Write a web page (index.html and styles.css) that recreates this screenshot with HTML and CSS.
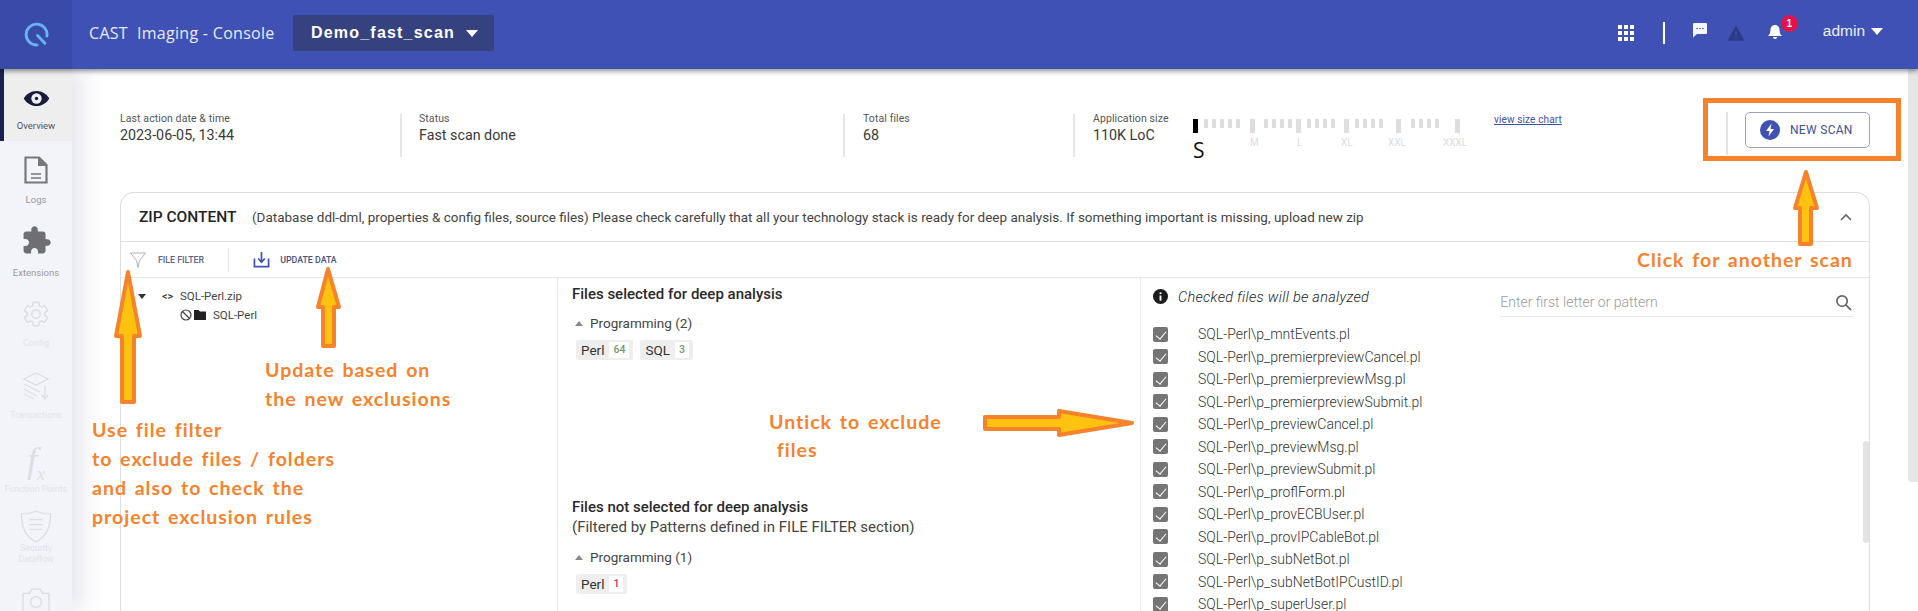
FILE: index.html
```html
<!DOCTYPE html>
<html lang="en">
<head>
<meta charset="utf-8">
<title>CAST Imaging - Console</title>
<link rel="stylesheet" href="styles.css">
</head>
<body>
<div class="app">
  <header class="topbar">
    <div class="logo-cell">
      <svg class="logo" viewBox="0 0 24 24"><path d="M22 13.500A10 10 0 1 0 12.500 22M13 13L20 20.500"/></svg>
    </div>
    <div class="app-title">CAST&nbsp; Imaging - Console</div>
    <div class="project"><span>Demo_fast_scan</span><i class="caret"></i></div>
    <div class="top-actions">
      <svg class="ic-grid" viewBox="0 0 16 16"><g><rect x="0" y="0" width="4" height="4"/><rect x="6" y="0" width="4" height="4"/><rect x="12" y="0" width="4" height="4"/><rect x="0" y="6" width="4" height="4"/><rect x="6" y="6" width="4" height="4"/><rect x="12" y="6" width="4" height="4"/><rect x="0" y="12" width="4" height="4"/><rect x="6" y="12" width="4" height="4"/><rect x="12" y="12" width="4" height="4"/></g></svg>
      <span class="top-sep"></span>
      <svg class="ic-chat" viewBox="0 0 16 16"><path d="M2 1h12a1 1 0 0 1 1 1v9a1 1 0 0 1-1 1H5l-4 3.500V2a1 1 0 0 1 1-1z"/><g class="dots"><circle cx="5" cy="6.500" r=".8"/><circle cx="8" cy="6.500" r=".8"/><circle cx="11" cy="6.500" r=".8"/></g></svg>
      <svg class="ic-warn" viewBox="0 0 18 16"><path d="M9 0.500L17.500 15.500H0.500z"/><path class="warn-mark" d="M8.300 6H9.700V11H8.300zM8.300 12H9.700V13.400H8.300z"/></svg>
      <div class="bell-wrap">
        <svg class="ic-bell" viewBox="0 0 16 16"><path d="M8 1c3 0 4.600 2.400 4.600 5.200 0 3 1 4.300 2.400 5.800H1c1.400-1.500 2.400-2.800 2.400-5.800C3.400 3.400 5 1 8 1zM6 13h4c0 1.300-.9 2-2 2s-2-.7-2-2z"/></svg>
        <span class="badge">1</span>
      </div>
      <div class="user"><span>admin</span><i class="caret"></i></div>
    </div>
  </header>

  <div class="content">
    <nav class="sidebar">
      <div class="nav-item active">
        <svg class="nav-ic eye" viewBox="0 0 28 18"><path class="dark" d="M14 1C8 1 3 4.500 .5 9 3 13.500 8 17 14 17s11-3.500 13.500-8C25 4.500 20 1 14 1z"/><circle class="light" cx="14" cy="9" r="5.500"/><circle class="dark" cx="14" cy="9" r="1.800"/></svg>
        <span>Overview</span>
      </div>
      <div class="nav-item dim">
        <svg class="nav-ic doc" viewBox="0 0 24 28"><path class="doc-line" d="M1.500 1.500H15L22.500 9V26.500H1.500z"/><path class="doc-fold" d="M14 1L23 10H14z"/><path class="doc-line thin" d="M7 18H17M7 22H17"/></svg>
        <span>Logs</span>
      </div>
      <div class="nav-item dim ext">
        <svg class="nav-ic puzzle" viewBox="0 0 24 24"><path d="M20.500 11H19V7c0-1.100-.9-2-2-2h-4V3.500C13 2.120 11.880 1 10.500 1S8 2.120 8 3.500V5H4c-1.100 0-1.990.9-1.990 2v3.800H3.500c1.490 0 2.700 1.210 2.700 2.700s-1.210 2.700-2.700 2.700H2V20c0 1.100.9 2 2 2h3.800v-1.500c0-1.490 1.210-2.700 2.700-2.700 1.490 0 2.700 1.210 2.700 2.700V22H17c1.100 0 2-.9 2-2v-4h1.500c1.380 0 2.500-1.120 2.500-2.500S21.880 11 20.500 11z"/></svg>
        <span>Extensions</span>
      </div>
      <div class="nav-item faded">
        <svg class="nav-ic line" viewBox="0 0 24 24"><path d="M19.430 12.980c.04-.32.07-.64.07-.98 0-.34-.03-.66-.07-.98l2.110-1.650c.19-.15.24-.42.12-.64l-2-3.460c-.09-.16-.26-.25-.44-.25-.06 0-.12.01-.17.03l-2.490 1c-.52-.4-1.080-.73-1.690-.98l-.38-2.650C14.460 2.180 14.250 2 14 2h-4c-.25 0-.46.18-.49.42l-.38 2.650c-.61.25-1.170.59-1.690.98l-2.490-1c-.06-.02-.12-.03-.18-.03-.17 0-.34.09-.43.25l-2 3.460c-.13.22-.07.49.12.64l2.110 1.650c-.04.32-.07.65-.07.98 0 .33.03.66.07.98l-2.110 1.650c-.19.15-.24.42-.12.64l2 3.460c.09.16.26.25.44.25.06 0 .12-.01.17-.03l2.490-1c.52.4 1.080.73 1.690.98l.38 2.650c.03.24.24.42.49.42h4c.25 0 .46-.18.49-.42l.38-2.650c.61-.25 1.170-.59 1.690-.98l2.490 1c.06.02.12.03.18.03.17 0 .34-.09.43-.25l2-3.460c.12-.22.07-.49-.12-.64l-2.110-1.650z"/><circle cx="12" cy="12" r="3.600"/></svg>
        <span>Config</span>
      </div>
      <div class="nav-item faded">
        <svg class="nav-ic line" viewBox="0 0 26 28"><path d="M13 1L25 7L13 13L1 7zM1 12L17 20M1 17L14 24M1 22L11 27M22 14V26M19 23L22 27L25 23"/></svg>
        <span>Transactions</span>
      </div>
      <div class="nav-item faded">
        <div class="fx">f<sub>x</sub></div>
        <span>Function Points</span>
      </div>
      <div class="nav-item faded sec">
        <svg class="nav-ic line" viewBox="0 0 32 34"><path d="M16 1C21 3.500 26 4 31 4C31 18 27 27 16 33C5 27 1 18 1 4C6 4 11 3.500 16 1zM9 10H23M9 15H23M10 20H22"/></svg>
        <span>Security<br>Dataflow</span>
      </div>
      <div class="nav-item faded">
        <svg class="nav-ic line" viewBox="0 0 26 26"><path d="M1 5H7L9 1H17L19 5H25V25H1z"/><circle cx="13" cy="13" r="5"/></svg>
      </div>
    </nav>

    <main class="main">
      <section class="stats">
        <div class="stat stat-date">
          <div class="stat-label">Last action date &amp; time</div>
          <div class="stat-value">2023-06-05, 13:44</div>
        </div>
        <div class="stat stat-status">
          <div class="stat-label">Status</div>
          <div class="stat-value">Fast scan done</div>
        </div>
        <div class="stat stat-files">
          <div class="stat-label">Total files</div>
          <div class="stat-value">68</div>
        </div>
        <div class="stat stat-app">
          <div class="stat-label">Application size</div>
          <div class="stat-value">110K LoC</div>
        </div>
        <div class="size-scale">
          <div class="ticks">
            <i class="tick on"></i>
            <i class="tick first"></i><i class="tick"></i><i class="tick"></i><i class="tick"></i><i class="tick"></i>
            <i class="tick tall g14"></i>
            <i class="tick g13"></i><i class="tick"></i><i class="tick"></i><i class="tick"></i>
            <i class="tick tall"></i>
            <i class="tick g10"></i><i class="tick"></i><i class="tick"></i><i class="tick"></i>
            <i class="tick tall g13"></i>
            <i class="tick g10"></i><i class="tick"></i><i class="tick"></i><i class="tick"></i>
            <i class="tick tall g17"></i>
            <i class="tick g14"></i><i class="tick"></i><i class="tick"></i><i class="tick"></i>
            <i class="tick tall g20"></i>
          </div>
          <div class="scale-labels"><b>S</b><span>M</span><span>L</span><span>XL</span><span>XXL</span><span>XXXL</span></div>
        </div>
        <a class="size-link" href="#">view size chart</a>
        <div class="scan-wrap">
          <button class="scan-btn">
            <svg viewBox="0 0 20 20"><circle cx="10" cy="10" r="10"/><path class="bolt" d="M11.500 3.500L6 11H9.500L8.500 16.500L14 9H10.500z"/></svg>
            NEW SCAN
          </button>
        </div>
      </section>

      <section class="card">
        <div class="card-head">
          <h2>ZIP CONTENT</h2>
          <p>(Database ddl-dml, properties &amp; config files, source files) Please check carefully that all your technology stack is ready for deep analysis. If something important is missing, upload new zip</p>
          <svg class="chevron" viewBox="0 0 12 8"><path d="M1 7L6 2L11 7"/></svg>
        </div>
        <div class="toolbar">
          <div class="tool">
            <svg class="ic-funnel" viewBox="0 0 16 16"><path d="M.5 1H15.500L9.500 8.500L8 15.500L6.500 8.500z"/></svg>
            <span>FILE FILTER</span>
          </div>
          <span class="tool-sep"></span>
          <div class="tool tool-update">
            <svg class="ic-update" viewBox="0 0 18 18"><path d="M1.500 8V16.500H16.500V8M9 1V11M5.500 8L9 12L12.500 8"/></svg>
            <span>UPDATE DATA</span>
          </div>
        </div>
        <div class="columns">
          <div class="col col-tree">
            <div class="tree-row">
              <i class="tree-caret"></i>
              <span class="code">&lt;&gt;</span>
              <span>SQL-Perl.zip</span>
            </div>
            <div class="tree-row tree-child">
              <svg class="ic-ban" viewBox="0 0 12 12"><circle cx="6" cy="6" r="5"/><path d="M2.500 2.500L9.500 9.500"/></svg>
              <svg class="ic-folder" viewBox="0 0 12 10"><path d="M0 0H4.500L6 1.500H12V10H0z"/></svg>
              <span>SQL-Perl</span>
            </div>
          </div>

          <div class="col col-tech">
            <div class="tech-block">
              <h3>Files selected for deep analysis</h3>
              <div class="group"><i class="up"></i>Programming (2)</div>
              <div class="chips">
                <span class="chip">Perl<em>64</em></span>
                <span class="chip">SQL<em>3</em></span>
              </div>
            </div>
            <div class="tech-block lower">
              <h3>Files not selected for deep analysis</h3>
              <p>(Filtered by Patterns defined in FILE FILTER section)</p>
              <div class="group"><i class="up"></i>Programming (1)</div>
              <div class="chips">
                <span class="chip">Perl<em class="bad">1</em></span>
              </div>
            </div>
          </div>

          <div class="col col-files">
            <div class="files-head">
              <svg class="ic-info" viewBox="0 0 16 16"><circle cx="8" cy="8" r="8"/><rect class="info-mark" x="7" y="7" width="2" height="5.500"/><rect class="info-mark" x="7" y="3.500" width="2" height="2"/></svg>
              <em>Checked files will be analyzed</em>
              <div class="search">
                <span>Enter first letter or pattern</span>
                <svg viewBox="0 0 18 18"><circle cx="7.500" cy="7.500" r="5.500"/><path d="M11.500 11.500L17 17"/></svg>
              </div>
            </div>
            <ul class="file-list">
              <li><i class="check"></i>SQL-Perl\p_mntEvents.pl</li>
              <li><i class="check"></i>SQL-Perl\p_premierpreviewCancel.pl</li>
              <li><i class="check"></i>SQL-Perl\p_premierpreviewMsg.pl</li>
              <li><i class="check"></i>SQL-Perl\p_premierpreviewSubmit.pl</li>
              <li><i class="check"></i>SQL-Perl\p_previewCancel.pl</li>
              <li><i class="check"></i>SQL-Perl\p_previewMsg.pl</li>
              <li><i class="check"></i>SQL-Perl\p_previewSubmit.pl</li>
              <li><i class="check"></i>SQL-Perl\p_proflForm.pl</li>
              <li><i class="check"></i>SQL-Perl\p_provECBUser.pl</li>
              <li><i class="check"></i>SQL-Perl\p_provIPCableBot.pl</li>
              <li><i class="check"></i>SQL-Perl\p_subNetBot.pl</li>
              <li><i class="check"></i>SQL-Perl\p_subNetBotIPCustID.pl</li>
              <li><i class="check"></i>SQL-Perl\p_superUser.pl</li>
            </ul>
            <span class="inner-thumb"></span>
          </div>
        </div>
      </section>
    </main>
  </div>

  <span class="page-thumb"></span>

  <div class="notes">
    <svg class="arrows" viewBox="0 0 1918 611">
      <path d="M128 272L140 336H134V402H122V336H116z"/>
      <path d="M328 269L339 307H334V346H323V307H318z"/>
      <path d="M1806 172L1817 208H1811V244H1800V208H1795z"/>
      <path d="M985 417H1059V411L1132 423L1059 435V429H985z"/>
    </svg>
    <div class="scan-box"></div>
    <div class="note note-update">Update based on<br>the new exclusions</div>
    <div class="note note-filter">Use file filter<br>to exclude files / folders<br>and also to check the<br>project exclusion rules</div>
    <div class="note note-untick">Untick to exclude<br>&nbsp;files</div>
    <div class="note note-scan">Click for another scan</div>
  </div>
</div>
</body>
</html>
```

FILE: styles.css
```css
* { box-sizing: border-box; }
html, body { margin: 0; height: 611px; overflow: hidden; background: #fff; }
body { font-family: Roboto, "Liberation Sans", sans-serif; color: #333; }

.app { position: relative; width: 1918px; height: 611px; overflow: hidden; display: flex; flex-direction: column; }

/* top bar */
.topbar { position: relative; z-index: 3; flex: 0 0 69px; display: flex; align-items: center; padding-bottom: 3px; background: #3f51b5; box-shadow: 0 2px 5px rgba(0,0,0,.45); color: #fff; }
.logo-cell { width: 72px; height: 69px; margin-bottom: -3px; background: #3a4aa8; display: flex; align-items: center; justify-content: center; flex: none; }
.logo { width: 25px; height: 25px; fill: none; stroke: #64b5f6; stroke-width: 2.800; stroke-linecap: round; }
.app-title { margin-left: 17px; width: 204px; font: 400 16px "Open Sans", sans-serif; letter-spacing: .3px; color: #e8ebf8; }
.project { width: 201px; height: 36px; background: #35427f; border-radius: 2px; display: flex; align-items: center; padding-left: 18px; font: 700 16px "Liberation Sans", sans-serif; letter-spacing: 1.200px; }
.caret { display: inline-block; width: 0; height: 0; border-left: 6.500px solid transparent; border-right: 6.500px solid transparent; border-top: 7px solid #fff; }
.project .caret { margin-left: 11px; }
.top-actions { margin-left: auto; display: flex; align-items: center; padding-right: 35px; }
.ic-grid { width: 16px; height: 16px; fill: #fff; margin-right: 29px; }
.top-sep { width: 2px; height: 22px; background: #fff; margin-right: 27px; }
.ic-chat { width: 16px; height: 16px; fill: #f4f5fb; margin-right: 19px; position: relative; top: -3px; }
.ic-chat .dots { fill: #3f51b5; }
.ic-warn { width: 18px; height: 16px; fill: #2b3a86; margin-right: 22px; position: relative; }
.ic-warn .warn-mark { fill: #3f51b5; }
.bell-wrap { position: relative; top: -1px; width: 16px; height: 16px; margin-right: 40px; }
.ic-bell { width: 16px; height: 16px; fill: #fff; display: block; }
.badge { position: absolute; left: 14px; top: -9px; width: 17px; height: 17px; border-radius: 50%; background: #e5114b; color: #fff; font: 700 10px/17px "Liberation Sans", sans-serif; text-align: center; }
.user { position: relative; top: -2px; display: flex; align-items: center; font: 400 15.500px "Liberation Sans", sans-serif; color: #eef0fa; }
.user .caret { margin-left: 6px; }

/* sidebar */
.content { flex: 1; display: flex; min-height: 0; }
.sidebar { position: relative; z-index: 2; width: 72px; flex: none; background: #f3f4f9; box-shadow: 6px 0 28px rgba(70,70,120,.18); overflow: hidden; }
.nav-item { height: 72px; display: flex; flex-direction: column; align-items: center; justify-content: flex-start; padding-top: 18px; font-size: 9.500px; line-height: 11px; text-align: center; color: #9a9a9f; flex: none; }
.nav-item.active { background: #eeeeef; border-left: 4px solid #1a2150; color: #555; padding-right: 4px; padding-top: 21px; }
.nav-ic { display: block; }
.eye { width: 27px; height: 17px; margin-bottom: 13px; }
.eye .dark { fill: #171b3c; }
.eye .light { fill: #eeeeef; }
.dim .nav-ic { margin-bottom: 10px; }
.nav-item.dim { padding-top: 15px; }
.doc { width: 24px; height: 28px; }
.doc-line { fill: none; stroke: #777; stroke-width: 2.200; }
.doc-line.thin { stroke-width: 1.400; }
.doc-fold { fill: #777; }
.puzzle { width: 31px; height: 31px; fill: #6f6f73; }
.nav-item.dim.ext { padding-top: 12px; }
.dim.ext .nav-ic { margin-bottom: 11px; }
.faded { color: #e1e2e9; padding-top: 15px; white-space: nowrap; font-size: 9px; }
.faded .line { width: 28px; height: 28px; fill: none; stroke: #dcdde5; stroke-width: 1.300; margin-bottom: 10px; }
.nav-item.sec { padding-top: 9px; }
.sec .nav-ic.line { width: 32px; height: 33px; margin-bottom: 0; }
.fx { font: italic 400 36px/32px "Liberation Serif", serif; color: #dcdde5; height: 32px; margin-bottom: 8px; }
.fx sub { font-size: 18px; line-height: 0; }

/* main */
.main { flex: 1; min-width: 0; padding: 45px 48px 0; display: flex; flex-direction: column; }
.stats { position: relative; flex: none; height: 43px; display: flex; margin-bottom: 35px; }
.stat { height: 43px; }
.stat-date { width: 280px; }
.stat-status { width: 443px; border-left: 2px solid #e6e6e6; padding-left: 17px; }
.stat-files { width: 230px; border-left: 2px solid #e6e6e6; padding-left: 18px; }
.stat-app { width: 120px; border-left: 2px solid #e6e6e6; padding-left: 18px; }
.stat-label { font-size: 10.500px; line-height: 12px; letter-spacing: .1px; color: #555; margin-top: -1px; }
.stat-value { font-size: 14.300px; line-height: 20px; color: #3a3a3a; }
.size-scale { width: 301px; position: relative; top: 5px; }
.ticks { display: flex; align-items: flex-start; height: 14px; }
.tick { flex: none; width: 4px; height: 9px; background: #dedede; margin-left: 4px; }
.tick.on { width: 5px; height: 14px; background: #000; margin-left: 0; }
.tick.first { margin-left: 6px; }
.tick.tall { height: 14px; width: 5px; }
.tick.g10 { margin-left: 6px; }
.tick.g13 { margin-left: 9px; }
.tick.g14 { margin-left: 10px; }
.tick.g17 { margin-left: 13px; }
.tick.g20 { margin-left: 16px; }
.scale-labels { display: grid; grid-template-columns: 57px 47px 44px 47px 55px 40px; margin-top: 4px; font-size: 10px; line-height: 12px; color: #dcdcdc; }
.scale-labels b { font: 400 21px/26px "Open Sans", sans-serif; color: #111; }
.size-link { font-size: 10px; line-height: 12px; letter-spacing: .13px; color: #3f51a5; height: 14px; }
.scan-wrap { position: absolute; right: 0; top: -2px; width: 144px; height: 43px; display: flex; justify-content: flex-end; border-left: 2px solid #e3e3e3; }
.scan-btn { width: 125px; height: 36px; border: 1px solid #98a3c4; border-radius: 5px; background: #fff; display: flex; align-items: center; gap: 10px; padding: 0 0 0 14px; font: 400 12px Roboto, sans-serif; letter-spacing: .3px; color: #3f4f95; }
.scan-btn svg { width: 20px; height: 20px; fill: #3f51b5; }
.scan-btn .bolt { fill: #fff; }

/* card */
.card { flex: 1; min-height: 0; border: 1px solid #dedede; border-bottom: 0; border-radius: 14px 14px 0 0; display: flex; flex-direction: column; }
.card-head { flex: 0 0 49px; display: flex; align-items: center; padding: 0 18px; border-bottom: 1px solid #e2e2e2; }
.card-head h2 { margin: 0; font-size: 15.500px; font-weight: 500; color: #222; white-space: nowrap; width: 113px; flex: none; }
.card-head p { margin: 0; font-size: 13.480px; color: #444; white-space: nowrap; }
.chevron { margin-left: auto; width: 12px; height: 8px; fill: none; stroke: #666; stroke-width: 1.600; position: relative; right: -1px; }
.toolbar { flex: 0 0 36px; display: flex; align-items: center; border-bottom: 1px solid #e6e6e6; padding-left: 9px; }
.tool { display: flex; align-items: center; font-size: 8.800px; font-weight: 500; color: #5a6485; }
.ic-funnel { width: 16px; height: 16px; fill: none; stroke: #a9a9a9; stroke-width: .9; margin-right: 12px; }
.tool-sep { width: 1px; height: 24px; background: #e2e2e2; margin: 0 24px; }
.tool-update { color: #46527f; }
.ic-update { width: 17px; height: 17px; fill: none; stroke: #3f51b5; stroke-width: 1.800; margin-right: 10px; }
.columns { flex: 1; min-height: 0; display: flex; }
.col { height: 100%; }
.col-tree { width: 437px; border-right: 1px solid #e8e8e8; padding: 9px 0 0 17px; font-size: 11.500px; color: #444; }
.tree-row { display: flex; align-items: center; height: 18.500px; }
.tree-caret { width: 0; height: 0; border-left: 4px solid transparent; border-right: 4px solid transparent; border-top: 5px solid #333; margin-right: 16px; }
.code { font-size: 11px; font-weight: 500; margin-right: 8px; width: 10px; color: #333; }
.tree-child { padding-left: 42px; }
.ic-ban { width: 12px; height: 12px; fill: none; stroke: #444; stroke-width: 1.200; margin-right: 2px; }
.ic-folder { width: 12px; height: 10px; fill: #222; margin-right: 7px; }
.col-tech { width: 583px; border-right: 1px solid #e8e8e8; padding-left: 14px; font-size: 13.500px; color: #444; display: flex; flex-direction: column; }
.tech-block { padding-top: 6px; }
.tech-block h3 { margin: 0; font-size: 15px; font-weight: 500; color: #2a2a2a; line-height: 20px; }
.tech-block.lower { padding-top: 0; margin-top: 137px; }
.tech-block p { margin: 0; font-size: 15px; line-height: 21px; color: #444; }
.group { display: flex; align-items: center; margin: 9px 0 0 3px; height: 20px; }
.up { width: 0; height: 0; border-left: 4px solid transparent; border-right: 4px solid transparent; border-bottom: 5px solid #888; margin-right: 7px; }
.chips { display: flex; gap: 7px; margin: 7px 0 0 4px; }
.chip { display: flex; align-items: center; height: 20px; background: #eeeeee; border-radius: 2px; padding: 0 4px 0 5px; font-size: 13.500px; color: #333; }
.chip em { font-style: normal; font-weight: 500; font-size: 10.500px; background: #fff; margin-left: 5px; padding: 0 4px; line-height: 16px; color: #6f9a6f; }
.chip em.bad { color: #d0314a; }
.col-files { position: relative; flex: 1; padding-left: 12px; overflow: hidden; }
.files-head { height: 45px; display: flex; align-items: flex-start; padding-top: 12px; }
.ic-info { width: 15px; height: 15px; fill: #1c1c1c; margin: -1px 10px 0 0; flex: none; }
.info-mark { fill: #fff; }
.files-head em { font-size: 14.500px; font-weight: 300; letter-spacing: .3px; color: #222; line-height: 16px; white-space: nowrap; }
.search { margin-left: 131px; width: 354px; height: 28px; position: relative; top: -1px; display: flex; justify-content: space-between; padding-top: 5px; border-bottom: 1px solid #e8e8e8; font-size: 14px; font-weight: 300; color: #9a9a9a; }
.search svg { width: 17px; height: 17px; fill: none; stroke: #666; stroke-width: 1.800; margin-right: 2px; }
.file-list { list-style: none; margin: 0; padding: 0; }
.file-list li { height: 22.500px; display: flex; align-items: center; font-size: 14px; font-weight: 300; color: #333; white-space: nowrap; }
.check { position: relative; flex: none; width: 15px; height: 15px; border-radius: 2px; background: #757575; margin-right: 30px; }
.check::after { content: ""; position: absolute; left: 5px; top: 2px; width: 5px; height: 9px; border: solid #fff; border-width: 0 1.800px 1.800px 0; transform: rotate(40deg); }
.inner-thumb { position: absolute; right: 0; top: 163px; width: 6px; height: 102px; background: #e3e3e3; border-radius: 3px; }

.page-thumb { position: absolute; z-index: 1; right: 0; top: 69px; width: 10px; height: 413px; background: #e6e6e6; border-radius: 0 0 0 4px; }

/* orange annotations, drawn over the screenshot */
.notes { position: absolute; inset: 0; z-index: 5; pointer-events: none; }
.arrows { position: absolute; inset: 0; width: 1918px; height: 611px; fill: #ffc20e; stroke: #f6822c; stroke-width: 4; stroke-linejoin: round; }
.scan-box { position: absolute; left: 1703px; top: 98px; width: 198px; height: 63px; border: 5px solid #f6822c; }
.note { position: absolute; font: 700 19.500px/29px Lato, sans-serif; letter-spacing: 1px; word-spacing: 2px; color: #f6822c; white-space: nowrap; }
.note-update { left: 265px; top: 355px; }
.note-filter { left: 92px; top: 415px; }
.note-untick { left: 769px; top: 408px; line-height: 28px; }
.note-scan { left: 1637px; top: 245px; }
```
